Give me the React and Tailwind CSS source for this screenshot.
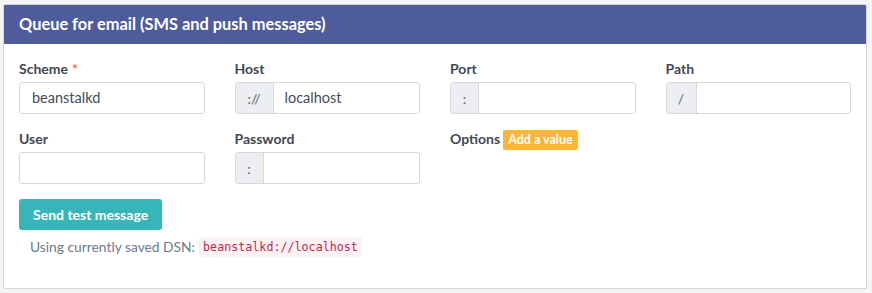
const fieldsTop = [
    { label: 'Scheme', required: true, value: 'beanstalkd' },
    { label: 'Host', prefix: '://', prefixW: 'w-[38px]', value: 'localhost' },
    { label: 'Port', prefix: ':', prefixW: 'w-[28px]', value: '' },
    { label: 'Path', prefix: '/', prefixW: 'w-[30px]', value: '' },
];

const Field = ({ label, required, prefix, prefixW, value }) => (
    <div className="flex flex-col">
        <label className="h-[20px] text-[14px] font-bold text-[#3f4857] leading-[20px]">
            {label}
            {required && <span className="text-[#ef6b57] ml-1">*</span>}
        </label>
        <div className="mt-[3px] flex h-[32px] border border-[#d5d8dd] rounded-[3px] overflow-hidden bg-white">
            {prefix && (
                <span className={`${prefixW} shrink-0 flex items-center justify-center bg-[#eceef1] border-r border-[#d5d8dd] text-[14px] text-[#5b6573]`}>
                    {prefix}
                </span>
            )}
            <span className={`flex items-center text-[14.5px] text-[#434c5b] ${prefix ? 'pl-[11px]' : 'pl-[12px]'}`}>{value}</span>
        </div>
    </div>
);

const App = () => {
    return (
        <div className="min-h-[293px] bg-[#f4f4f5] pt-[4px] pl-[3px] pr-[5px] font-['Lato',sans-serif]">
            <div className="h-[285px] bg-white border border-[#d6d6d6] rounded-[2px] overflow-hidden">
                <div className="h-[39px] bg-[#4e5c9b] flex items-center px-[15px]">
                    <h2 className="text-[16.4px] font-bold text-white">Queue for email (SMS and push messages)</h2>
                </div>
                <div className="px-[15px] pt-[15px]">
                    <div className="grid grid-cols-4 gap-x-[30px]">
                        {fieldsTop.map((f) => (
                            <Field key={f.label} {...f} />
                        ))}
                    </div>
                    <div className="grid grid-cols-4 gap-x-[30px] mt-[15px]">
                        <Field label="User" value="" />
                        <Field label="Password" prefix=":" prefixW="w-[28px]" value="" />
                        <div className="flex items-start gap-[3px]">
                            <span className="h-[20px] text-[14px] font-bold text-[#3f4857] leading-[20px]">Options</span>
                            <button className="mt-[1px] h-[20px] px-[5px] rounded-[2px] bg-[#fbb633] text-white text-[12.5px] font-bold leading-[20px]">
                                Add a value
                            </button>
                        </div>
                    </div>
                    <button className="mt-[15px] h-[31px] px-[14px] rounded-[3px] bg-[#37b6ba] text-white text-[14px] font-bold">
                        Send test message
                    </button>
                    <p className="mt-[7px] pl-[11px] text-[13.8px] text-[#6c7a8a] flex items-center">
                        Using currently saved DSN:
                        <code className="ml-[4px] px-[4px] h-[20px] flex items-center rounded-[3px] bg-[#fbf2f4] text-[#c7254e] text-[11.7px] font-['DejaVu_Sans_Mono',monospace]">
                            beanstalkd://localhost
                        </code>
                    </p>
                </div>
            </div>
        </div>
    );
};

export default App;
